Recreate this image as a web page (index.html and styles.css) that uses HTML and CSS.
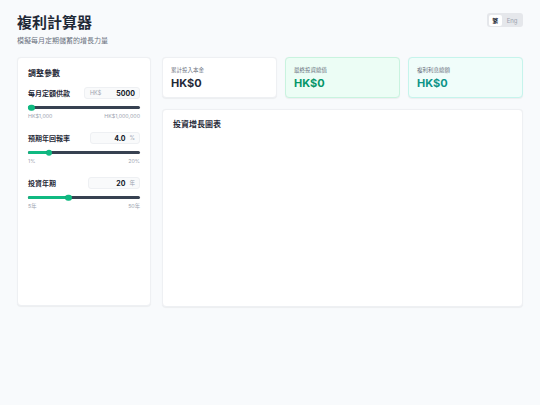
FILE: index.html
```html
<!DOCTYPE html>
<html lang="zh-Hant">
<head>
<meta charset="utf-8">
<title>複利計算器</title>
<link rel="stylesheet" href="styles.css">
</head>
<body>
<div class="page">
  <header class="header">
    <div>
      <h1 class="title">複利計算器</h1>
      <p class="subtitle">模擬每月定期儲蓄的增長力量</p>
    </div>
    <div class="lang">
      <span class="lang-btn active">繁</span>
      <span class="lang-btn">Eng</span>
    </div>
  </header>
  <main class="main">
    <section class="card params">
      <h2 class="card-title">調整參數</h2>
      <div class="field">
        <div class="field-row">
          <span class="field-label">每月定額供款</span>
          <div class="input w55"><span class="unit">HK$</span><span class="val">5000</span></div>
        </div>
        <div class="track"><div class="fill" style="width:0.4%"></div><div class="thumb" style="left:0.4%"></div></div>
        <div class="range-labels"><span>HK$1,000</span><span>HK$1,000,000</span></div>
      </div>
      <div class="field">
        <div class="field-row">
          <span class="field-label">預期年回報率</span>
          <div class="input w49"><span class="val">4.0</span><span class="unit r">%</span></div>
        </div>
        <div class="track"><div class="fill" style="width:15.8%"></div><div class="thumb" style="left:15.8%"></div></div>
        <div class="range-labels"><span>1%</span><span>20%</span></div>
      </div>
      <div class="field">
        <div class="field-row">
          <span class="field-label">投資年期</span>
          <div class="input w51"><span class="val">20</span><span class="unit r">年</span></div>
        </div>
        <div class="track"><div class="fill" style="width:33.3%"></div><div class="thumb" style="left:33.3%"></div></div>
        <div class="range-labels"><span>5年</span><span>50年</span></div>
      </div>
    </section>
    <div class="right">
      <div class="stats">
        <div class="stat">
          <div class="stat-label">累計投入本金</div>
          <div class="stat-value">HK$0</div>
        </div>
        <div class="stat green">
          <div class="stat-label">最終投資總值</div>
          <div class="stat-value">HK$0</div>
        </div>
        <div class="stat teal">
          <div class="stat-label">複利利息總額</div>
          <div class="stat-value">HK$0</div>
        </div>
      </div>
      <section class="card chart">
        <h2 class="card-title">投資增長圖表</h2>
      </section>
    </div>
  </main>
</div>
</body>
</html>
```

FILE: styles.css
```css
* { box-sizing: border-box; }
html, body { margin: 0; padding: 0; }
body {
  background: #f8fafc;
  font-family: Inter, "Noto Sans CJK TC", sans-serif;
  color: #1f2937;
  width: 540px;
  height: 405px;
}
.page { padding: 13px 17px 0 17px; }
.header {
  display: flex;
  justify-content: space-between;
  align-items: flex-start;
}
.title {
  margin: 0;
  font-size: 15px;
  line-height: 20px;
  font-weight: 700;
  color: #1f2937;
}
.subtitle {
  margin: 3px 0 0;
  font-size: 7px;
  line-height: 9px;
  color: #6b7280;
}
.lang {
  display: flex;
  background: #e5e7eb;
  border-radius: 3px;
  padding: 1.5px;
  margin-top: 0;
  gap: 1px;
  height: 14px;
}
.lang-btn {
  font-size: 6px;
  line-height: 11px;
  padding: 0 4px;
  color: #9ca3af;
  border-radius: 2px;
}
.lang-btn.active {
  background: #fff;
  color: #1f2937;
  font-weight: 700;
  padding: 0 3.5px;
}
.main {
  display: flex;
  gap: 11px;
  margin-top: 12px;
}
.card {
  background: #fff;
  border: 1px solid #eef0f3;
  border-radius: 4px;
  box-shadow: 0 0.5px 1px rgba(0,0,0,0.05);
}
.params {
  width: 134px;
  height: 249px;
  padding: 10px 10px;
}
.card-title {
  margin: 0;
  font-size: 8px;
  line-height: 11px;
  font-weight: 700;
  color: #1f2937;
}
.field { margin-top: 8px; }
.field + .field { margin-top: 12px; }
.field-row {
  display: flex;
  justify-content: space-between;
  align-items: center;
}
.field-label {
  font-size: 7px;
  font-weight: 700;
  color: #1f2937;
}
.input {
  height: 12px;
  background: #f9fafb;
  border: 1px solid #eef0f3;
  border-radius: 3px;
  display: flex;
  justify-content: space-between;
  align-items: center;
  padding: 0 4px 0 5px;
}
.w55 { width: 56px; }
.w49 { width: 50px; }
.w51 { width: 52px; }
.unit {
  font-size: 5.5px;
  color: #9ca3af;
}
.unit.r { margin-left: 4px; }
.input .val {
  font-size: 7px;
  font-weight: 700;
  color: #111827;
}
.w49 .val, .w51 .val { margin-left: auto; }
.track {
  position: relative;
  height: 3px;
  background: #374151;
  border-radius: 2px;
  margin-top: 7px;
}
.fill {
  height: 100%;
  background: #10b981;
  border-radius: 2px 0 0 2px;
}
.thumb {
  position: absolute;
  top: 50%;
  width: 6.5px;
  height: 6.5px;
  background: #10b981;
  border-radius: 50%;
  transform: translate(0, -50%);
}
.range-labels {
  display: flex;
  justify-content: space-between;
  font-size: 5.3px;
  color: #9ca3af;
  margin-top: 4px;
  line-height: 7px;
}
.right {
  flex: 1;
  display: flex;
  flex-direction: column;
  gap: 11px;
}
.stats {
  display: flex;
  gap: 8px;
}
.stat {
  flex: 1;
  height: 41px;
  background: #fff;
  border: 1px solid #eef0f3;
  border-radius: 4px;
  padding: 8px 8px;
  box-shadow: 0 0.5px 1px rgba(0,0,0,0.05);
}
.stat.green { background: #ecfdf5; border-color: #c9f3df; }
.stat.teal { background: #f0fdfa; border-color: #c6f4ec; }
.stat-label {
  font-size: 5.5px;
  line-height: 8px;
  color: #6b7280;
}
.stat-value {
  margin-top: 2px;
  font-size: 11px;
  line-height: 14px;
  font-weight: 700;
  color: #1f2937;
}
.green .stat-value { color: #059669; }
.teal .stat-value { color: #0d9488; }
.chart {
  height: 198px;
  padding: 9px 10px;
}
```
